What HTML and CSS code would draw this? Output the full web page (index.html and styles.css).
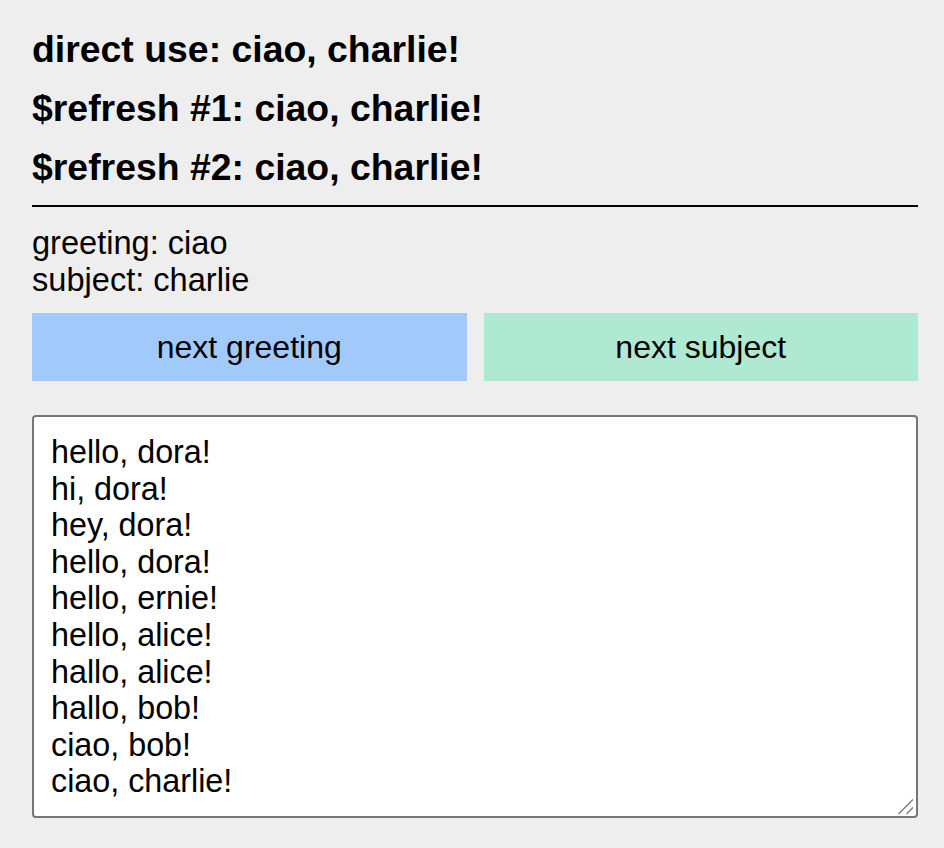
FILE: index.html
```html
<!DOCTYPE html>
<html>
<head>
<meta charset="utf-8">
<link rel="stylesheet" href="styles.css">
</head>
<body>
<div class="app">
  <h3 class="line">direct use: ciao, charlie!</h3>
  <h3 class="line">$refresh #1: ciao, charlie!</h3>
  <h3 class="line">$refresh #2: ciao, charlie!</h3>
  <hr class="rule">
  <div class="state">
    <div>greeting: ciao</div>
    <div>subject: charlie</div>
  </div>
  <div class="buttons">
    <button class="btn btn-blue">next greeting</button>
    <button class="btn btn-green">next subject</button>
  </div>
  <div class="log-wrap">
    <textarea class="log" readonly>hello, dora!
hi, dora!
hey, dora!
hello, dora!
hello, ernie!
hello, alice!
hallo, alice!
hallo, bob!
ciao, bob!
ciao, charlie!</textarea>
    <svg class="grip" width="16" height="16" viewBox="0 0 16 16">
      <line x1="0.5" y1="15" x2="15" y2="0.5" stroke="#767676" stroke-width="1.3"/>
      <line x1="8.5" y1="15" x2="15" y2="8.5" stroke="#767676" stroke-width="1.3"/>
    </svg>
  </div>
</div>
</body>
</html>
```

FILE: styles.css
```css
html, body {
  margin: 0;
  padding: 0;
  background: #eeeeee;
}

body {
  font-family: "Liberation Sans", Arial, sans-serif;
  font-size: 32px;
  color: #000;
}

.app {
  width: 886px;
  margin-left: 32px;
  padding-top: 28px;
}

.line {
  font-size: 37.4px;
  font-weight: bold;
  margin: 0 0 16px 0;
  line-height: 43px;
}

.line:last-of-type {
  margin-bottom: 0;
}

.rule {
  border: none;
  height: 2px;
  background: #000;
  margin: 16px 0 17px 0;
}

.state {
  font-size: 32.6px;
  line-height: 37px;
}

.buttons {
  display: flex;
  gap: 17px;
  margin-top: 15px;
}

.btn {
  flex: 1;
  height: 68px;
  border: none;
  border-radius: 0;
  font-family: "Liberation Sans", Arial, sans-serif;
  font-size: 32px;
  color: #000;
  padding: 0;
}

.btn-blue {
  background: #a1c9f9;
}

.btn-green {
  background: #b0e9d2;
}

.log-wrap {
  position: relative;
  margin-top: 34px;
  height: 403px;
}

.log {
  display: block;
  box-sizing: border-box;
  width: 886px;
  height: 403px;
  margin: 0;
  padding: 17px 17px 16px 17px;
  border: 2px solid #767676;
  border-radius: 4px;
  background: #fff;
  font-family: "Liberation Sans", Arial, sans-serif;
  font-size: 32.3px;
  line-height: 36.6px;
  color: #000;
  resize: none;
  overflow: hidden;
  outline: none;
}

.grip {
  position: absolute;
  right: 4px;
  bottom: 3px;
}
```
